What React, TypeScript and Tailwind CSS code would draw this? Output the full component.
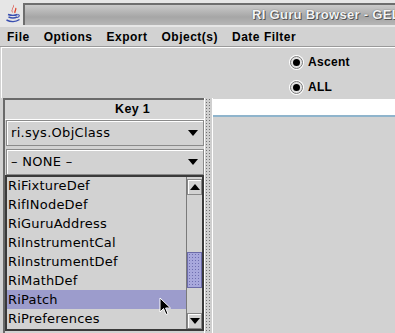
import React from "react";

const items = [
  "RiFixtureDef",
  "RifINodeDef",
  "RiGuruAddress",
  "RiInstrumentCal",
  "RiInstrumentDef",
  "RiMathDef",
  "RiPatch",
  "RiPreferences",
];

const menus = ["File", "Options", "Export", "Object(s)", "Date Filter"];

const bold = { fontFamily: '"Liberation Sans", Arial, sans-serif' };

function Arrow({ up = false }: { up?: boolean }) {
  return (
    <svg width="10" height="6" viewBox="0 0 10 6" className={up ? "rotate-180" : ""}>
      <path d="M0 0 H10 L5 6 Z" fill="#000" />
    </svg>
  );
}

function JavaIcon() {
  return (
    <svg width="16" height="19" viewBox="0 0 16 19" className="shrink-0 block">
      <path d="M8 0.5 C10.5 3 5.5 5 8 9 C4.5 6.5 9 4 8 0.5 Z" fill="#d62a1e" />
      <path d="M10.5 4 C12 5.5 9 7 10 9" stroke="#e0402a" strokeWidth="1.3" fill="none" />
      <path d="M3 10.5 C6 11.5 10 11.5 12.5 10.5" stroke="#3a4fb0" strokeWidth="1.4" fill="none" />
      <path d="M3.5 13 C6 14 10 14 12 13" stroke="#3a4fb0" strokeWidth="1.4" fill="none" />
      <path d="M1.5 16 C5.5 18 11 18 14.5 15.5" stroke="#3a4fb0" strokeWidth="1.4" fill="none" />
      <path d="M12.5 10.5 C15 10.5 15 13 12 13.5" stroke="#3a4fb0" strokeWidth="1.1" fill="none" />
    </svg>
  );
}

function Radio({ label }: { label: string }) {
  return (
    <div className="flex items-center gap-[5px] h-[14px]">
      <span className="w-[13px] h-[13px] rounded-full border border-[#7a7a7a] bg-[#e2e2e2] shadow-[0_0_0_1px_#fff] flex items-center justify-center">
        <span className="w-[7px] h-[7px] rounded-full bg-black" />
      </span>
      <span className="text-[12px] font-bold text-black tracking-[0.3px]" style={bold}>
        {label}
      </span>
    </div>
  );
}

function Combo({ text }: { text: string }) {
  return (
    <div className="h-[26px] ml-[1px] border border-[#8a8a8a] shadow-[inset_1px_1px_0_#fff] flex items-center justify-between pl-[4px] pr-[5px] text-[13px] tracking-[0.3px]">
      <span>{text}</span>
      <Arrow />
    </div>
  );
}

export default function App() {
  return (
    <div
      className="relative w-[395px] h-[333px] overflow-hidden bg-[#d2d2d2] text-black flex flex-col"
      style={{ fontFamily: '"DejaVu Sans", "Liberation Sans", sans-serif' }}
    >
      {/* Title bar */}
      <div className="h-[27px] shrink-0 flex items-stretch bg-[#e6e6e6]">
        <div className="w-[23px] shrink-0 flex items-center justify-center pl-[2px]">
          <JavaIcon />
        </div>
        <div className="flex-1 min-w-0 mt-[3px] mb-[2px] border-t-2 border-l-2 border-[#6e6e6e] bg-[linear-gradient(#cacaca,#a6a6a6_60%,#b6b6b6)] flex items-center pl-[227px] whitespace-nowrap overflow-hidden">
          <span
            className="text-[13px] font-bold text-[#f4f4f4] tracking-[0.3px] [text-shadow:0_0_1px_#444,1px_1px_0_#555]"
            style={bold}
          >
            RI Guru Browser - GEL
          </span>
        </div>
      </div>

      {/* Menu bar */}
      <div
        className="h-[20px] shrink-0 flex items-center gap-[14px] pl-[7px] text-[12px] font-bold tracking-[0.5px] border-b border-[#9a9a9a]"
        style={bold}
      >
        {menus.map((m) => (
          <span key={m}>{m}</span>
        ))}
      </div>

      {/* Options panel */}
      <div className="h-[51px] shrink-0 border-t border-l border-white ml-[1px] flex flex-col gap-[11px] pt-[7px] pl-[288px]">
        <Radio label="Ascent" />
        <Radio label="ALL" />
      </div>

      {/* Body */}
      <div className="flex-1 flex min-h-0 ml-[3px]">
        <div className="w-[201px] flex flex-col border-t-2 border-l-2 border-[#6a6a6a]">
          <div
            className="h-[20px] shrink-0 flex items-center justify-center text-[12.5px] font-bold border-b border-white pl-[56px] tracking-[0.3px] bg-[#d6d6d6]"
            style={bold}
          >
            Key 1
          </div>
          <div className="flex flex-col gap-[3px]">
            <Combo text="ri.sys.ObjClass" />
            <Combo text="– NONE –" />
          </div>
          <div className="h-[156px] shrink-0 flex border-2 border-[#3a3a3a] overflow-hidden">
            <div className="flex-1 flex flex-col -mt-[1px] text-[13px] tracking-[0.2px]">
              {items.map((it) => (
                <div
                  key={it}
                  className={`h-[19px] flex items-center pl-[1px] shrink-0 ${it === "RiPatch" ? "bg-[#9c9ccc]" : ""}`}
                >
                  {it}
                </div>
              ))}
            </div>
            <div className="w-[16px] flex flex-col border-l border-[#7a7a7a] bg-[#d2d2d2] pt-[2px]">
              <div className="h-[16px] shrink-0 border border-[#888] shadow-[inset_1px_1px_0_#fff] flex items-center justify-center">
                <Arrow up />
              </div>
              <div className="h-[57px] shrink-0" />
              <div className="h-[36px] shrink-0 border border-[#6b6ba8] bg-[#a8a8dc] bg-[radial-gradient(#6f6fb0_0.8px,transparent_1px)] bg-[length:3px_3px]" />
              <div className="flex-1" />
              <div className="h-[16px] shrink-0 border border-[#888] shadow-[inset_1px_1px_0_#fff] flex items-center justify-center">
                <Arrow />
              </div>
            </div>
          </div>
        </div>

        {/* Split divider */}
        <div className="w-[9px] border-l border-white border-r border-[#9a9a9a] bg-[#cfcfcf] bg-[radial-gradient(#707070_0.7px,transparent_1px)] bg-[length:3px_3px]" />

        {/* Right pane */}
        <div className="flex-1 flex flex-col pt-[1px]">
          <div className="h-[18px] bg-white border-b-2 border-[#8fb4cc]" />
        </div>
      </div>

      {/* Cursor */}
      <svg className="absolute left-[159px] top-[297px]" width="14" height="20" viewBox="0 0 14 20">
        <path d="M1 1 L1 15 L4.5 11.5 L7 17.5 L9 16.6 L6.6 11 L11.5 11 Z" fill="#000" stroke="#fff" strokeWidth="1" />
      </svg>
    </div>
  );
}
